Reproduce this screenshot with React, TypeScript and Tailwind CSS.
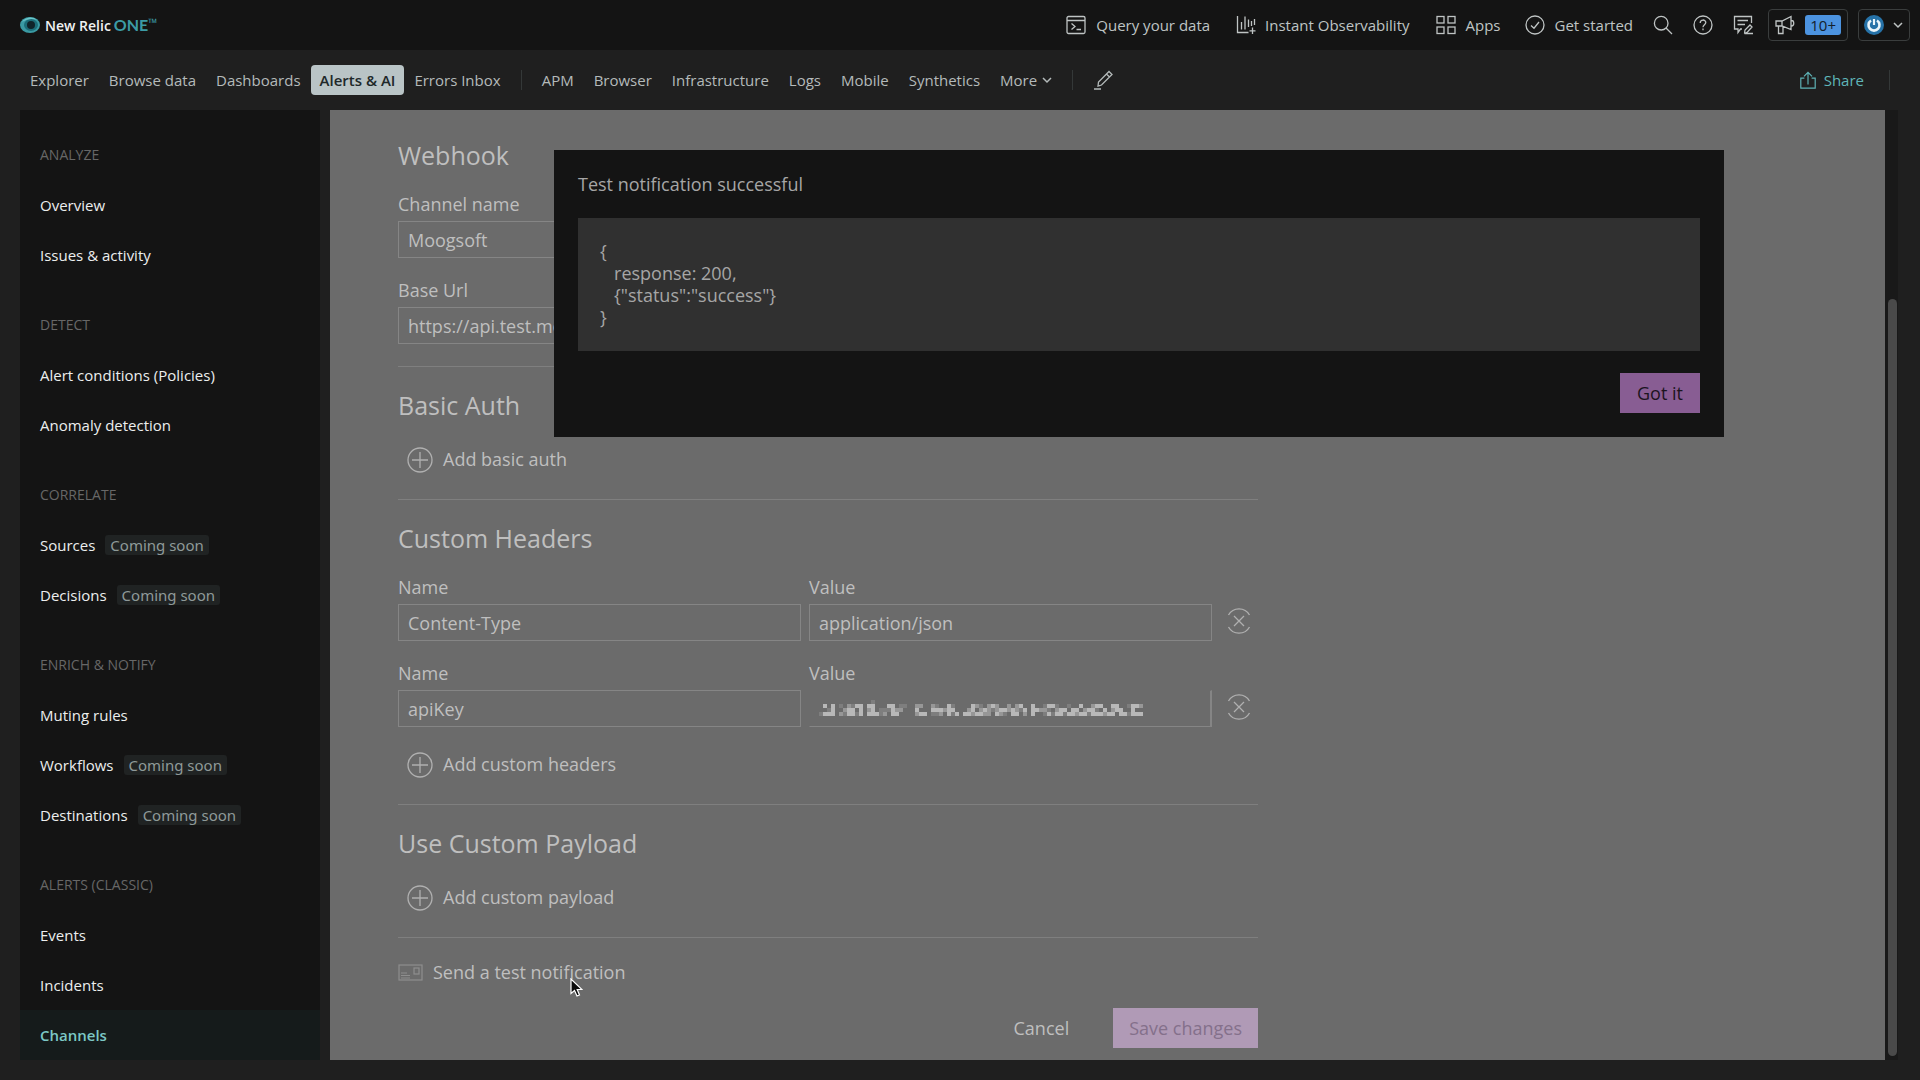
import React from 'react';

interface NavSection {
  title: string;
  items: { label: string; soon?: boolean; active?: boolean }[];
}

const sections: NavSection[] = [
  { title: 'ANALYZE', items: [{ label: 'Overview' }, { label: 'Issues & activity' }] },
  { title: 'DETECT', items: [{ label: 'Alert conditions (Policies)' }, { label: 'Anomaly detection' }] },
  { title: 'CORRELATE', items: [{ label: 'Sources', soon: true }, { label: 'Decisions', soon: true }] },
  {
    title: 'ENRICH & NOTIFY',
    items: [{ label: 'Muting rules' }, { label: 'Workflows', soon: true }, { label: 'Destinations', soon: true }],
  },
  { title: 'ALERTS (CLASSIC)', items: [{ label: 'Events' }, { label: 'Incidents' }, { label: 'Channels', active: true }] },
];

// One character per 4px block, higher digit = brighter block
const maskRows = [
  '000000000000010000000000000000000000000000000000000000000000000000000000000000000',
  '030301021330330003301100220021003100003210232002023003001331001003002330033001332',
  '001300233030230111322000300033323300023023212332321303322102330330233103023300300',
  '133302133130333120330000233011203130332332203210330203001313313323313332330331333',
];

const maskFill = ['', '#7e7e7e', '#979797', '#b8b8b8'];

function MaskedValue() {
  return (
    <svg width="324" height="16" viewBox="0 0 324 16" shapeRendering="crispEdges" aria-hidden="true">
      {maskRows.map((row, y) =>
        row.split('').map((c, x) =>
          c === '0' ? null : <rect key={`${x}-${y}`} x={x * 4} y={y * 4} width="4" height="4" fill={maskFill[Number(c)]} />
        )
      )}
    </svg>
  );
}

function LogoMark() {
  return (
    <svg width="20" height="18" viewBox="0 0 20 18" aria-hidden="true">
      <ellipse cx="10" cy="9" rx="10" ry="8" fill="#3a9aa3" />
      <ellipse cx="11" cy="9" rx="7" ry="6" fill="#1c6d78" />
      <ellipse cx="11" cy="9" rx="4" ry="4" fill="#10242a" />
      <path d="M2 6 C5 1 13 0 17 4 C12 2 7 3 2 6Z" fill="#6cc5ca" />
    </svg>
  );
}

function Icon({ children, size = 20 }: { children: React.ReactNode; size?: number }) {
  return (
    <svg width={size} height={size} viewBox="0 0 20 20" fill="none" stroke="currentColor" strokeWidth="1.3" aria-hidden="true" className="shrink-0">
      {children}
    </svg>
  );
}

function Chevron() {
  return (
    <svg width="10" height="8" viewBox="0 0 10 8" fill="none" stroke="currentColor" strokeWidth="1.5" aria-hidden="true">
      <path d="M1 2 L5 6 L9 2" />
    </svg>
  );
}

function TopBar() {
  return (
    <header className="flex h-[50px] items-center bg-[#141414] pl-5 pr-[10px] text-[15px] text-[#bfc4c4]">
      <a href="#" className="flex items-center">
        <LogoMark />
        <span className="ml-[5px] text-[14px] font-semibold text-[#f0f2f2]">New Relic</span>
        <span className="ml-[3px] font-['Lato'] text-[16px] font-bold text-[#3c9ba5]">ONE</span>
        <span className="mb-1 text-[12px] text-[#3c9ba5]">™</span>
      </a>

      <div className="ml-auto flex items-center">
        <button className="flex items-center gap-[10px]">
          <Icon>
            <rect x="1" y="1.5" width="18" height="17" rx="1.5" />
            <path d="M1 5.5 H19 M5.5 8.5 L9 11.5 L5.5 14.5 M10.5 14.5 H15" />
          </Icon>
          Query your data
        </button>
        <button className="ml-[26px] flex items-center gap-[9px]">
          <Icon>
            <path d="M1.5 1 V17.5 H12.5 M5.5 7 V14.5 M9 1.5 V14.5 M12.5 4.5 V12 M15.5 6 V11 M18.5 4 V10 M16.5 12.5 V19 M13.5 15.8 H19.5" />
          </Icon>
          Instant Observability
        </button>
        <button className="ml-[26px] flex items-center gap-[10px]">
          <Icon>
            <rect x="1" y="1.5" width="7" height="6.5" />
            <rect x="12" y="1.5" width="7" height="6.5" />
            <rect x="1" y="12" width="7" height="6.5" />
            <rect x="12" y="12" width="7" height="6.5" />
          </Icon>
          Apps
        </button>
        <button className="ml-[24px] flex items-center gap-[10px]">
          <Icon>
            <circle cx="10" cy="10" r="9" />
            <path d="M6 10.5 L9 13.2 L14 7" />
          </Icon>
          Get started
        </button>
        <button aria-label="Search" className="ml-5">
          <Icon>
            <circle cx="8.2" cy="8.2" r="6.8" />
            <path d="M13 13 L19 19" />
          </Icon>
        </button>
        <button aria-label="Help" className="ml-5">
          <Icon>
            <circle cx="10" cy="10" r="9" />
            <path d="M7.2 8 C7.2 4 12.8 4.2 12.8 7.6 C12.8 9.8 10 9.8 10 12.2 M10 13.6 V15.2" />
          </Icon>
        </button>
        <button aria-label="Feedback" className="ml-5">
          <Icon>
            <path d="M9 14 H7.5 L5 17.5 V14 H1.5 V1.5 H18.5 V8 M4.5 5.5 H15 M4.5 9.5 H12 M11.5 18.5 L12 15 L17 10 L19 12 L14.5 17 L11.5 18.5 H20" />
          </Icon>
        </button>
        <button className="ml-[15px] flex h-8 w-20 items-center justify-between rounded border border-[#3a3d3d] px-[6px]">
          <Icon>
            <path d="M1 6 H7 L16 1.5 V14.5 L7 11 H1 Z M3.5 11 V18.5 H8 V11.5 M7 6 V11 M16.5 5.5 C19.5 5.5 19.5 11 16.5 11" />
          </Icon>
          <span className="rounded-[3px] bg-[#4c93e0] px-[5px] text-[15px] leading-5 text-[#14202c]">10+</span>
        </button>
        <button aria-label="Account" className="ml-[10px] flex h-8 w-[52px] items-center justify-between rounded border border-[#3a3d3d] pl-[5px] pr-[6px]">
          <svg width="20" height="20" viewBox="0 0 20 20" fill="none" aria-hidden="true">
            <circle cx="10" cy="10" r="10" fill="#2672a8" />
            <path d="M7 5.5 A5.5 5.5 0 1 0 13 5.5" stroke="#eaf5fb" strokeWidth="2.6" />
            <path d="M10 4 V10" stroke="#eaf5fb" strokeWidth="2.2" />
          </svg>
          <Chevron />
        </button>
      </div>
    </header>
  );
}

function NavLink({ label }: { label: string }) {
  return (
    <a href="#" className="px-[10px]">
      {label}
    </a>
  );
}

function NavBar() {
  return (
    <nav className="flex h-[60px] items-center pl-5 pr-[30px] text-[15px] text-[#b4baba]">
      <NavLink label="Explorer" />
      <NavLink label="Browse data" />
      <NavLink label="Dashboards" />
      <a href="#" className="rounded bg-[#b9c4c6] px-[9px] text-[15px] font-semibold leading-[30px] text-[#20282a]">
        Alerts &amp; AI
      </a>
      <NavLink label="Errors Inbox" />
      <span className="mx-[10px] h-5 w-px bg-[#343838]" />
      <NavLink label="APM" />
      <NavLink label="Browser" />
      <NavLink label="Infrastructure" />
      <NavLink label="Logs" />
      <NavLink label="Mobile" />
      <NavLink label="Synthetics" />
      <button className="flex items-center gap-[5px] px-[10px]">
        More
        <Chevron />
      </button>
      <span className="mx-[10px] h-5 w-px bg-[#343838]" />
      <button aria-label="Edit navigation" className="px-[10px]">
        <Icon>
          <path d="M5 16 L5.5 12 L16 1.5 L19 4.5 L8.5 15 Z M13.5 4 L16.5 7 M1 19 H8" />
        </Icon>
      </button>
      <button className="ml-auto flex items-center gap-[7px] pr-[25px] text-[#5fb5b8]">
        <Icon size={18}>
          <path d="M6 8 H2 V19 H18 V8 H14 M10 15 V1.5 M5.5 6 L10 1.5 L14.5 6" />
        </Icon>
        Share
      </button>
      <span className="h-5 w-px bg-[#343838]" />
    </nav>
  );
}

function Sidebar() {
  return (
    <aside className="w-[300px] shrink-0 bg-[#141414]">
      {sections.map((section) => (
        <div key={section.title} className="pt-5">
          <h2 className="px-5 text-[14px] leading-[50px] text-[#676767]">{section.title}</h2>
          <ul>
            {section.items.map((item) => (
              <li key={item.label}>
                <a
                  href="#"
                  className={
                    item.active
                      ? 'flex h-[50px] items-center bg-[#151b1b] px-5 text-[15px] font-semibold text-[#7cc8c6]'
                      : 'flex h-[50px] items-center px-5 text-[15px] text-[#eceeee]'
                  }
                >
                  {item.label}
                  {item.soon && (
                    <span className="ml-[10px] rounded-[3px] bg-[#202323] px-[5px] font-['Noto_Sans',sans-serif] leading-5 text-[#8f9a99]">
                      Coming soon
                    </span>
                  )}
                </a>
              </li>
            ))}
          </ul>
        </div>
      ))}
    </aside>
  );
}

function Field({ id, label, value }: { id: string; label: string; value: string }) {
  return (
    <div>
      <label htmlFor={id} className="mb-[5px] block leading-6">
        {label}
      </label>
      <input id={id} defaultValue={value} className="block h-[37px] w-full border border-[#858585] bg-transparent px-[9px] outline-none" />
    </div>
  );
}

function RemoveButton() {
  return (
    <button type="button" aria-label="Remove header" className="mb-[7px] flex justify-center self-end">
      <svg width="24" height="26" viewBox="0 0 24 26" fill="none" stroke="#b0b0b0" strokeWidth="1.3" aria-hidden="true">
        <path d="M1.5 7 A12 12 0 0 1 22.5 7 M1.5 19 A12 12 0 0 0 22.5 19 M7 8 L17 18 M17 8 L7 18" />
      </svg>
    </button>
  );
}

function AddButton({ label }: { label: string }) {
  return (
    <button type="button" className="ml-[9px] flex items-start gap-[10px] leading-6">
      <svg width="26" height="26" viewBox="0 0 26 26" fill="none" stroke="#b0b0b0" strokeWidth="1.3" aria-hidden="true">
        <circle cx="13" cy="13" r="12" />
        <path d="M13 5 V21 M5 13 H21" />
      </svg>
      {label}
    </button>
  );
}

function Heading({ children }: { children: React.ReactNode }) {
  return <h2 className="text-[25px] leading-9">{children}</h2>;
}

function WebhookForm() {
  return (
    <form className="w-[860px] max-w-full text-[18px]">
      <section className="space-y-[19px] border-b border-[#7f7f7f] pb-[22px]">
        <Heading>Webhook</Heading>
        <div className="space-y-5">
          <Field id="channel-name" label="Channel name" value="Moogsoft" />
          <Field id="base-url" label="Base Url" value="https://api.test.moogsoft.ai" />
        </div>
      </section>

      <section className="space-y-6 border-b border-[#7f7f7f] pb-[26px] pt-5">
        <Heading>Basic Auth</Heading>
        <AddButton label="Add basic auth" />
      </section>

      <section className="border-b border-[#7f7f7f] pb-[26px] pt-5">
        <Heading>Custom Headers</Heading>
        <div className="mt-[19px] grid grid-cols-[1fr_1fr_38px] gap-x-2 gap-y-5">
          <Field id="header-name-1" label="Name" value="Content-Type" />
          <Field id="header-value-1" label="Value" value="application/json" />
          <RemoveButton />
          <Field id="header-name-2" label="Name" value="apiKey" />
          <div>
            <label htmlFor="header-value-2" className="mb-[5px] block leading-6">
              Value
            </label>
            <div className="relative">
              <input
                id="header-value-2"
                className="block h-[37px] w-full border border-r-2 border-[#858585] border-l-transparent border-t-transparent bg-transparent px-[9px] outline-none"
              />
              <div className="pointer-events-none absolute left-[10px] top-[10px]">
                <MaskedValue />
              </div>
            </div>
          </div>
          <RemoveButton />
        </div>
        <div className="mt-[25px]">
          <AddButton label="Add custom headers" />
        </div>
      </section>

      <section className="space-y-6 border-b border-[#7f7f7f] pb-[26px] pt-5">
        <Heading>Use Custom Payload</Heading>
        <AddButton label="Add custom payload" />
      </section>

      <button type="button" className="relative mt-[22px] flex items-center gap-[10px] leading-6">
        <svg width="25" height="18" viewBox="0 0 25 18" fill="none" stroke="#8e8e8e" strokeWidth="1.2" aria-hidden="true">
          <rect x="1" y="2" width="23" height="15" />
          <rect x="16" y="5" width="5" height="6" />
          <path d="M3 10 H9 M3 12.5 H12 M3 15 H12" />
        </svg>
        Send a test notification
        {/* Mouse pointer */}
        <svg width="13" height="19" viewBox="0 0 13 19" className="absolute left-[172px] top-[18px]" aria-hidden="true">
          <path d="M1 1 V15.5 L4.5 12.5 L7 18 L9.5 17 L7.2 11.5 H12 Z" fill="#0b0b0b" stroke="#fff" strokeWidth="1.2" />
        </svg>
      </button>

      <div className="mt-6 flex items-center justify-end gap-11">
        <button type="button">Cancel</button>
        <button type="submit" className="h-10 bg-[#b09ab6] px-4 text-[#84708b]">
          Save changes
        </button>
      </div>
    </form>
  );
}

function TestResultDialog() {
  return (
    <div
      role="dialog"
      aria-labelledby="test-result-title"
      className="absolute left-56 right-[161px] top-10 bg-[#141414] p-6 text-[18px] text-[#a6a6a6]"
    >
      <h3 id="test-result-title" className="leading-5">
        Test notification successful
      </h3>
      <pre className="mt-6 bg-[#303030] px-[22px] pb-[23px] pt-[22px] font-['Open_Sans',sans-serif] leading-[22px]">
        {'{\n   response: 200,\n   {"status":"success"}\n}'}
      </pre>
      <div className="mt-[22px] flex justify-end">
        <button className="h-10 w-20 bg-[#885d93] text-[#1c141e]">Got it</button>
      </div>
    </div>
  );
}

export default function App() {
  return (
    <div className="flex min-h-screen flex-col bg-[#1f1f1f] font-['Open_Sans',sans-serif]">
      <TopBar />
      <NavBar />
      <div className="flex grow pb-5 pl-5 pr-[22px]">
        <Sidebar />
        <main className="relative ml-[10px] grow bg-[#6b6b6b] px-[68px] pb-3 pt-[27px] text-[#bfbfbf]">
          <WebhookForm />
          <TestResultDialog />
        </main>
        <div className="flex w-[13px] flex-col justify-end bg-[#191919] pb-1 pl-[3px] pr-px">
          <div className="h-4/5 rounded-full bg-[#4a4a4a]" />
        </div>
      </div>
    </div>
  );
}
